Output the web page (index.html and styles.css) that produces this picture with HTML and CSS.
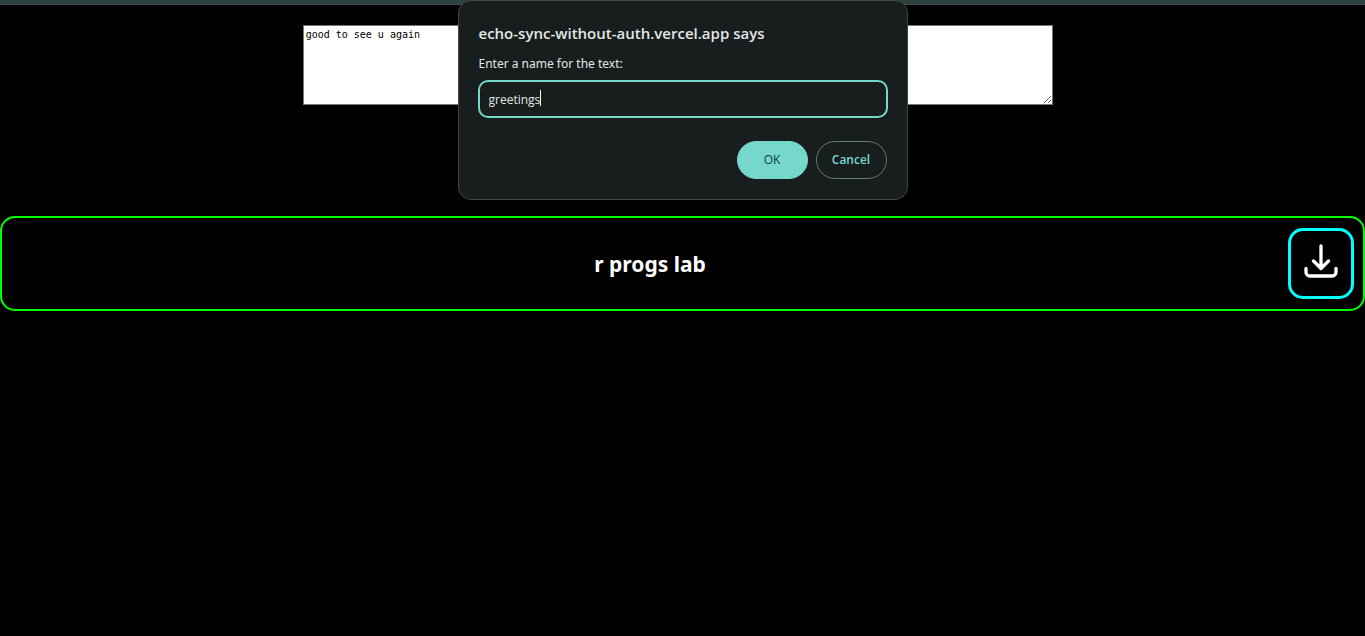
FILE: index.html
```html
<!DOCTYPE html>
<html lang="en">
<head>
<meta charset="utf-8">
<title>Echo Sync</title>
<link rel="stylesheet" href="styles.css">
</head>
<body>
<div class="browser-edge"></div>
<main class="page">
  <div class="composer">
    <textarea class="composer-text" aria-label="Text to save">good to see u again</textarea>
  </div>
  <section class="entry">
    <h2 class="entry-name">r progs lab</h2>
    <button class="download" type="button" aria-label="Download">
      <svg class="download-icon" viewBox="0 0 24 24" aria-hidden="true">
        <path d="M3 16.5v2.25A2.25 2.25 0 0 0 5.25 21h13.5A2.25 2.25 0 0 0 21 18.75V16.5M16.5 12 12 16.5m0 0L7.5 12m4.5 4.5V3"/>
      </svg>
    </button>
  </section>
</main>
<form class="dialog" role="dialog" aria-labelledby="dialog-title">
  <h1 class="dialog-title" id="dialog-title">echo-sync-without-auth.vercel.app says</h1>
  <label class="dialog-label" for="text-name">Enter a name for the text:</label>
  <div class="field">
    <input class="field-input" id="text-name" type="text" value="greetings">
    <span class="caret"></span>
  </div>
  <div class="actions">
    <button class="action action-ok" type="button">OK</button>
    <button class="action action-cancel" type="button">Cancel</button>
  </div>
</form>
</body>
</html>
```
FILE: styles.css
```css
* {
  box-sizing: border-box;
}

body {
  margin: 0;
  min-height: 100vh;
  background: #000;
  color: #fff;
  font-family: "Noto Sans", "Open Sans", sans-serif;
}

.browser-edge {
  height: 5px;
  background: #2a4340;
  border-bottom: 1px solid #444b4a;
}

.composer {
  display: flex;
  justify-content: center;
  padding-top: 20px;
}

.composer-text {
  width: 55%;
  height: 80px;
  margin: 0 9px 0 0;
  padding: 2px;
  border: 1px solid #767676;
  background: #fff;
  color: #000;
  font: 10px/14px "DejaVu Sans Mono", monospace;
}

.entry {
  display: flex;
  align-items: center;
  margin-top: 111px;
  padding: 10px 9px 10px 10px;
  border: 2px solid #0f0;
  border-radius: 15px;
}

.entry-name {
  flex: 1;
  margin: 0;
  text-align: center;
  font-size: 21px;
  line-height: 28px;
  font-weight: 700;
}

.download {
  padding: 10px 10px 15px;
  border: 3px solid #0ff;
  border-radius: 15px;
  background: #000;
  color: #fff;
}

.download-icon {
  display: block;
  width: 40px;
  height: 40px;
  fill: none;
  stroke: currentColor;
  stroke-width: 2;
  stroke-linecap: round;
  stroke-linejoin: round;
}

.dialog {
  position: absolute;
  top: 0;
  left: 50%;
  width: 450px;
  max-width: 100%;
  transform: translateX(-50%);
  padding: 22px 20px 20px;
  border: 1px solid #434746;
  border-radius: 13px;
  background: #181d1d;
  color: #e3e8e6;
  font-size: 12px;
}

.dialog-title {
  margin: 0 0 11px;
  font: 600 15px/20px "Open Sans", "Noto Sans", sans-serif;
}

.dialog-label {
  display: block;
  margin-bottom: 6px;
  line-height: 20px;
}

.field {
  position: relative;
  margin: 0 -1px;
}

.field-input {
  display: block;
  width: 100%;
  height: 38px;
  padding: 0 9px;
  border: 2px solid #75d8cb;
  border-radius: 10px;
  outline: none;
  background: transparent;
  color: inherit;
  font: 12px/20px "Open Sans", "Noto Sans", sans-serif;
}

.caret {
  position: absolute;
  top: 10px;
  left: 62px;
  width: 1px;
  height: 16px;
  background: #fff;
}

.actions {
  display: flex;
  justify-content: flex-end;
  gap: 8px;
  margin-top: 23px;
}

.action {
  width: 71px;
  height: 38px;
  padding: 0;
  border: 1px solid #75d8cb;
  border-radius: 19px;
  font: 600 12px/20px "Open Sans", "Noto Sans", sans-serif;
}

.action-ok {
  background: #75d8cb;
  color: #173c38;
  font-weight: 500;
}

.action-cancel {
  border-color: #607a76;
  background: transparent;
  color: #75d8cb;
}
```
